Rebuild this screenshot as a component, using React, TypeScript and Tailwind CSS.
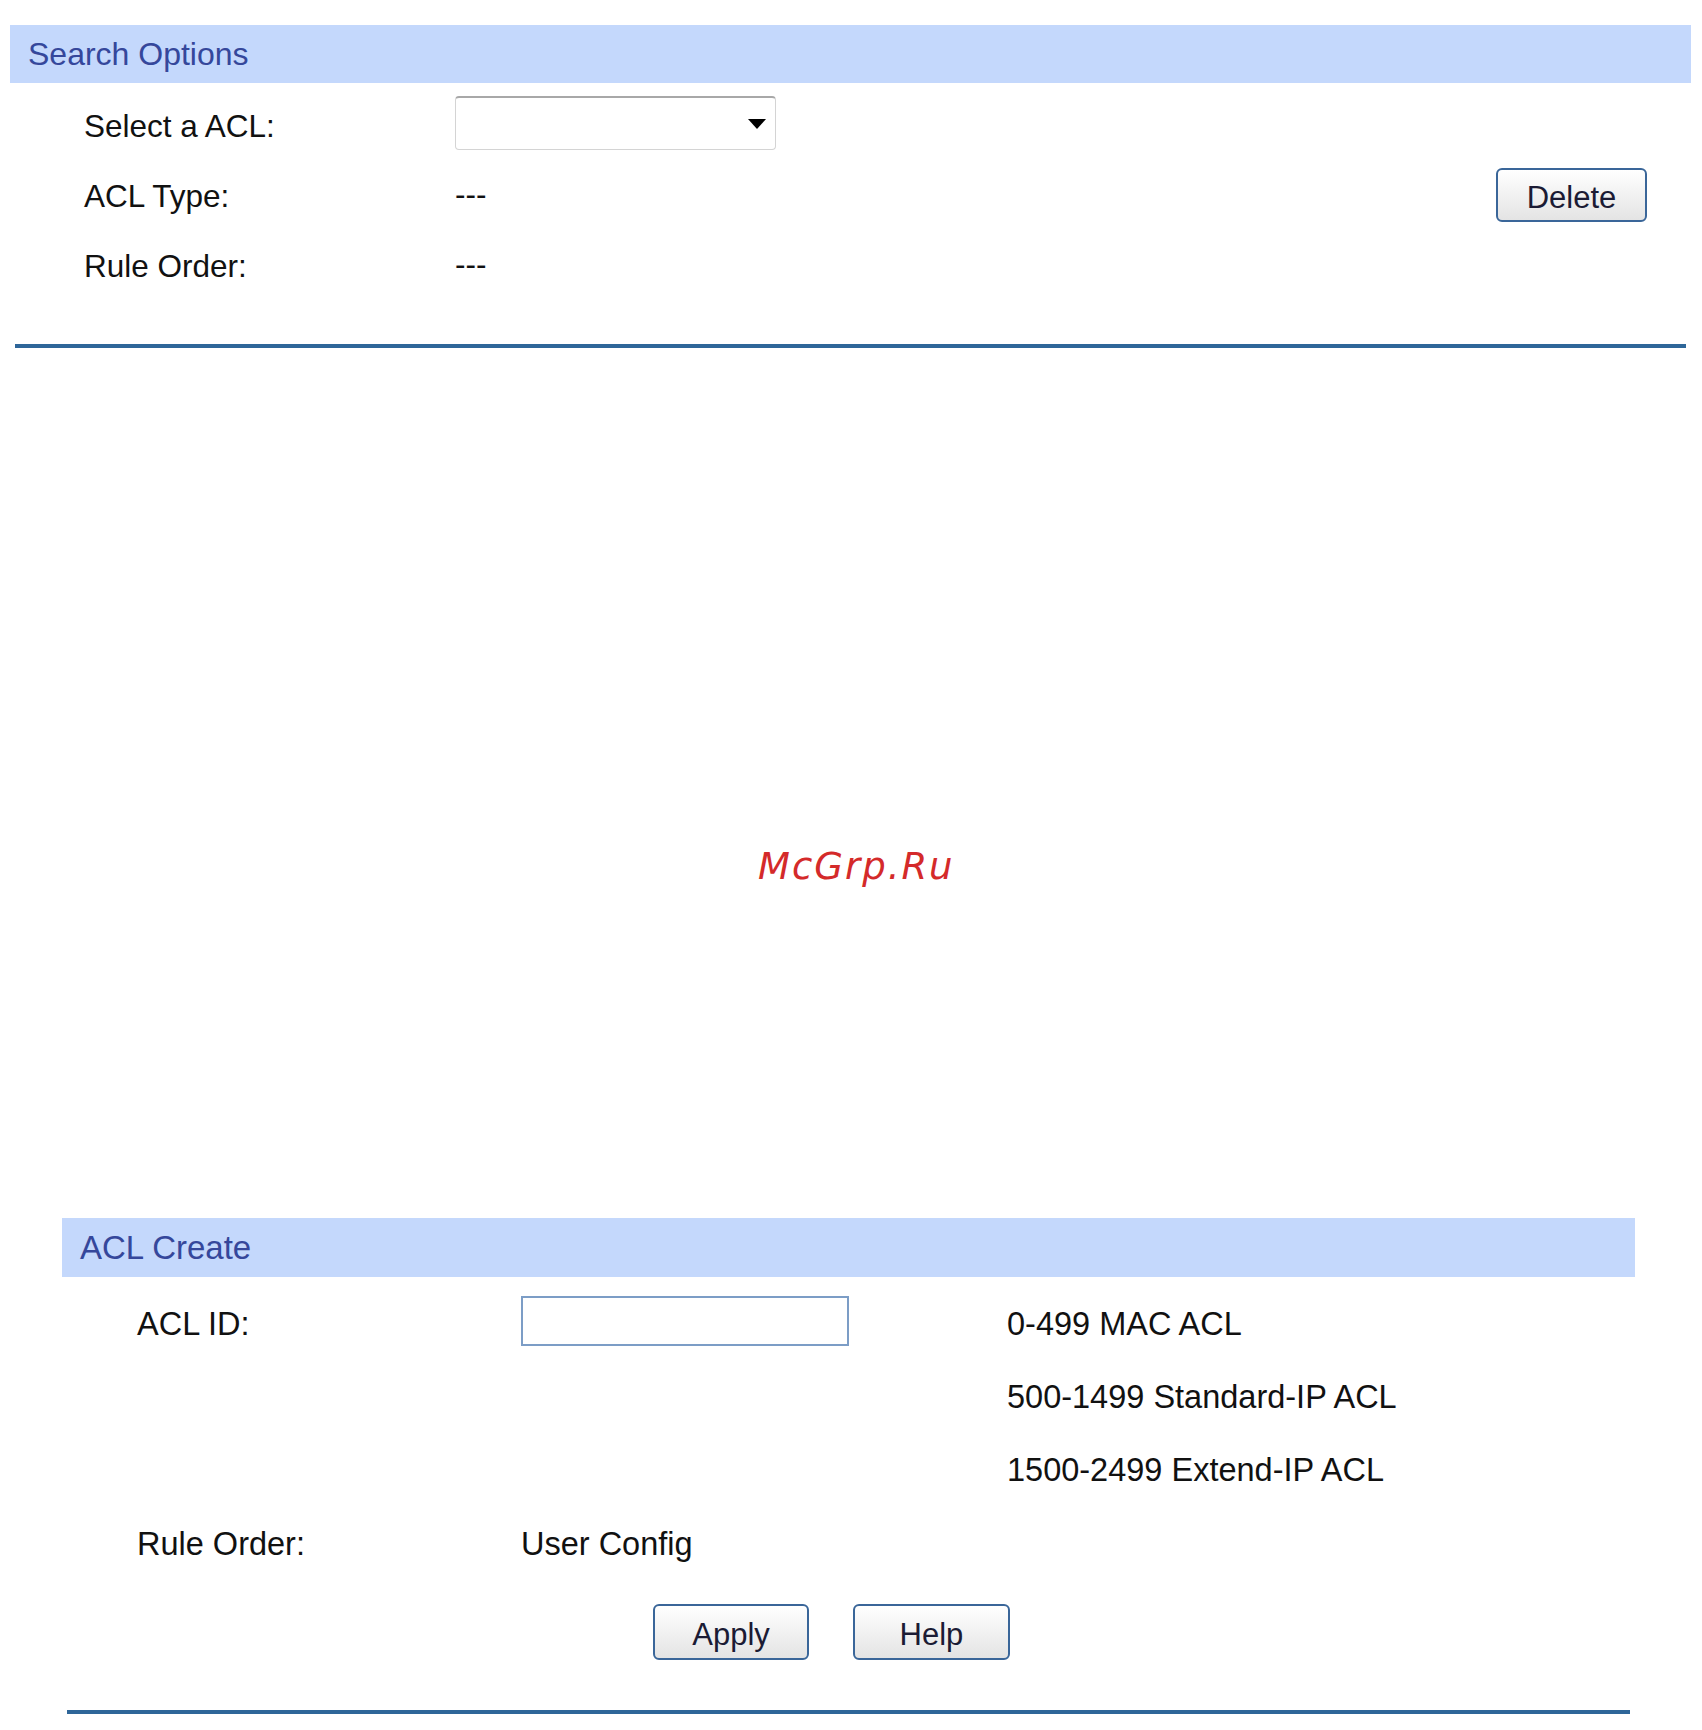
import React from "react";

const font = { fontFamily: '"Liberation Sans", Arial, sans-serif' };

function Btn({ label, className = "" }: { label: string; className?: string }) {
  return (
    <button
      className={`flex items-center justify-center rounded-[6px] border-2 border-[#3a6699] bg-gradient-to-b from-[#ffffff] to-[#e4e4e4] pt-[4px] text-[31px] leading-none text-[#1b1b34] ${className}`}
    >
      {label}
    </button>
  );
}

export default function App() {
  return (
    <div
      className="relative h-[1730px] w-[1702px] overflow-hidden bg-white text-[32px] leading-none text-[#111111]"
      style={font}
    >
      <div className="h-[25px]" />
      {/* Search Options */}
      <div className="ml-[10px] w-[1681px]">
        <div className="flex h-[58px] items-center bg-[#c4d8fc] pl-[18px] text-[32px] text-[#35479b]">
          Search Options
        </div>
        <div className="pt-[9px] text-[31.5px]">
          <div className="flex h-[70px] items-center">
            <div className="w-[445px] pl-[74px]">Select a ACL:</div>
            <div className="mb-[8px] flex h-[54px] w-[321px] items-center justify-end rounded-[4px] border border-[#d4d4d4] border-t-[#a8a8a8] border-t-2 bg-white pr-[9px]">
              <svg width="18" height="10" viewBox="0 0 18 10">
                <path d="M0 0 H18 L9 10 Z" fill="#000" />
              </svg>
            </div>
          </div>
          <div className="flex h-[70px] items-center">
            <div className="w-[445px] pl-[74px]">ACL Type:</div>
            <div className="mb-[4px] flex-1">---</div>
            <Btn label="Delete" className="mb-[4px] mr-[44px] h-[54px] w-[151px]" />
          </div>
          <div className="flex h-[70px] items-center">
            <div className="w-[445px] pl-[74px]">Rule Order:</div>
            <div className="mb-[4px]">---</div>
          </div>
        </div>
      </div>
      <div className="ml-[15px] mt-[42px] h-[4px] w-[1671px] bg-[#2e6699]" />

      {/* ACL Create */}
      <div className="ml-[62px] mt-[870px] w-[1573px]">
        <div className="flex h-[59px] items-center bg-[#c4d8fc] pl-[18px] text-[33px] text-[#35479b]">
          ACL Create
        </div>
        <div className="pt-[11px] text-[32.5px]">
          <div className="flex h-[73px] items-center">
            <div className="w-[459px] pl-[75px]">ACL ID:</div>
            <div className="mb-[8px] h-[50px] w-[328px] border-2 border-[#7c9dc6] bg-white" />
            <div className="ml-[158px]">0-499 MAC ACL</div>
          </div>
          <div className="flex h-[73px] items-center">
            <div className="ml-[945px]">500-1499 Standard-IP ACL</div>
          </div>
          <div className="flex h-[73px] items-center">
            <div className="ml-[945px]">1500-2499 Extend-IP ACL</div>
          </div>
          <div className="flex h-[74px] items-center">
            <div className="w-[459px] pl-[75px]">Rule Order:</div>
            <div>User Config</div>
          </div>
        </div>
        <div className="mt-[23px] flex gap-[44px] pl-[591px]">
          <Btn label="Apply" className="h-[56px] w-[156px]" />
          <Btn label="Help" className="h-[56px] w-[157px]" />
        </div>
      </div>
      <div className="ml-[67px] mt-[50px] h-[4px] w-[1563px] bg-[#2e6699]" />

      {/* watermark */}
      <div
        className="absolute left-[758px] top-[848px] text-[37px] italic leading-none tracking-[2px] text-[#d42a2a]"
        style={{ fontFamily: '"DejaVu Sans", sans-serif' }}
      >
        McGrp.Ru
      </div>
    </div>
  );
}
